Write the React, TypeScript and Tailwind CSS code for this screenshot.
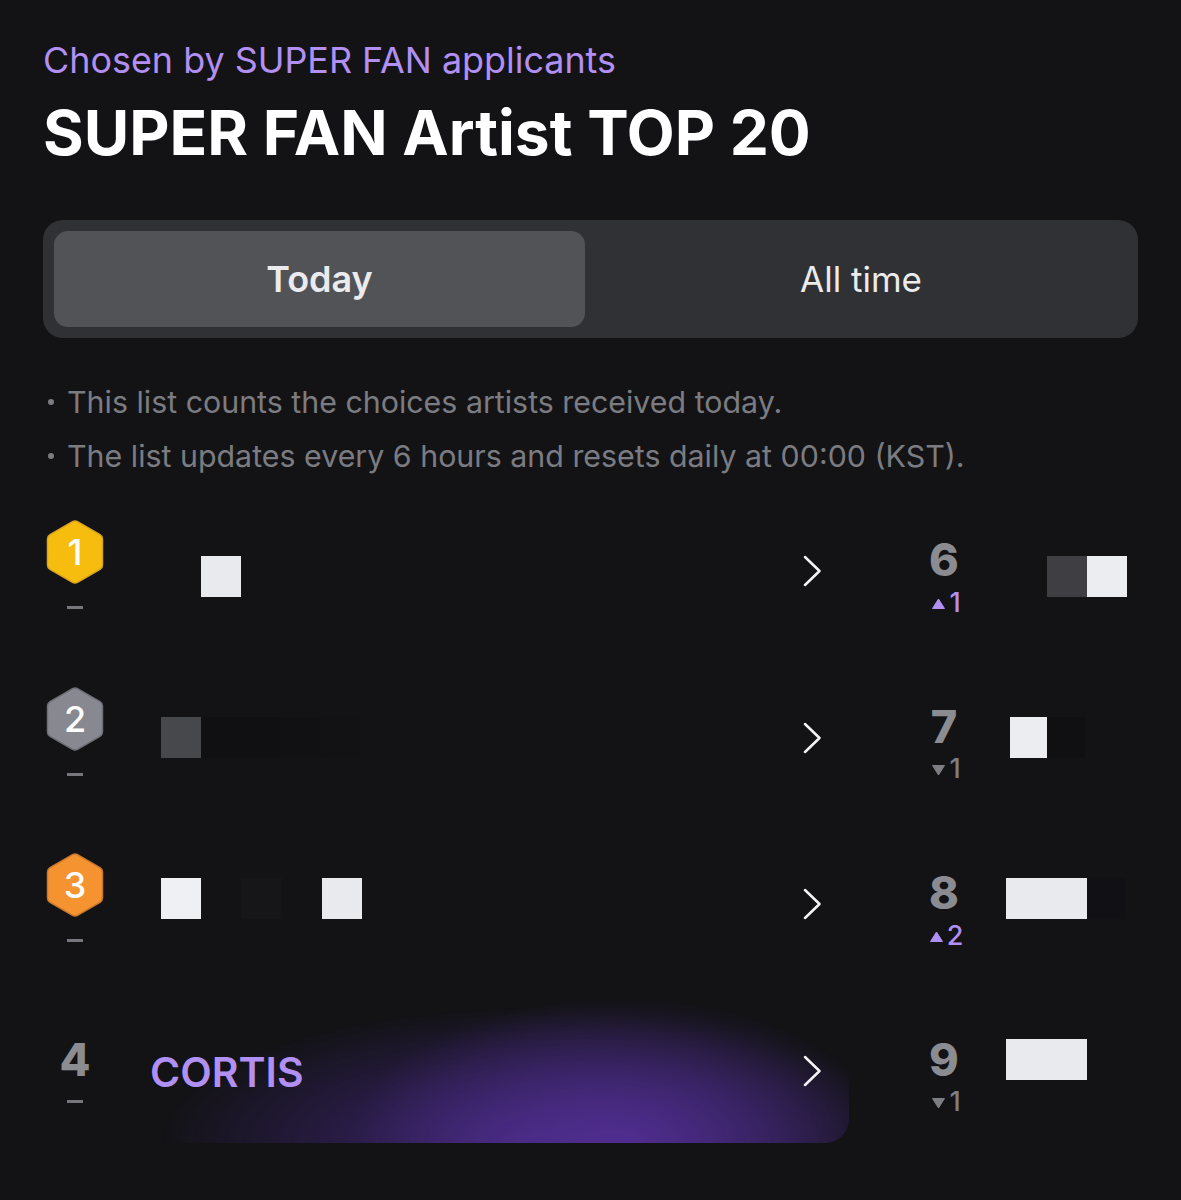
import React from "react";

type Block = { width: number; color: string };

interface Artist {
  rank: number;
  delta: "same" | "up" | "down";
  amount?: number;
  blocks: Block[];
  blockLeft: number;
  blockTop: number;
}

const WHITE = "#e9eaee";

const LEFT: Artist[] = [
  { rank: 1, delta: "same", blocks: [{ width: 40, color: WHITE }], blockLeft: 201, blockTop: 55 },
  {
    rank: 2,
    delta: "same",
    blocks: [
      { width: 40, color: "#47484c" },
      { width: 80, color: "#101013" },
      { width: 40, color: "#111114" },
      { width: 40, color: "#121215" },
    ],
    blockLeft: 161,
    blockTop: 49,
  },
  {
    rank: 3,
    delta: "same",
    blocks: [
      { width: 40, color: "#eff0f4" },
      { width: 40, color: "#131316" },
      { width: 41, color: "#161619" },
      { width: 40, color: "#131316" },
      { width: 40, color: WHITE },
    ],
    blockLeft: 161,
    blockTop: 43.5,
  },
];

const RIGHT: Artist[] = [
  {
    rank: 6,
    delta: "up",
    amount: 1,
    blocks: [
      { width: 40, color: "#3e3e43" },
      { width: 40, color: "#ecedf1" },
    ],
    blockLeft: 1047,
    blockTop: 55,
  },
  {
    rank: 7,
    delta: "down",
    amount: 1,
    blocks: [
      { width: 37, color: "#ecedf1" },
      { width: 38, color: "#101013" },
    ],
    blockLeft: 1010,
    blockTop: 49,
  },
  {
    rank: 8,
    delta: "up",
    amount: 2,
    blocks: [
      { width: 81, color: WHITE },
      { width: 38, color: "#111115" },
    ],
    blockLeft: 1006,
    blockTop: 43.5,
  },
  {
    rank: 9,
    delta: "down",
    amount: 1,
    blocks: [{ width: 81, color: WHITE }],
    blockLeft: 1006,
    blockTop: 38,
  },
];

function Hexagon({ rank, fill, edge }: { rank: number; fill: string; edge: string }) {
  return (
    <div className="relative w-[58px] h-[64px] flex items-center justify-center">
      <svg viewBox="0 0 58 64" className="absolute inset-0 w-full h-full">
        <path
          d="M26.500 1.700a5 5 0 0 1 5 0l22.500 13a5 5 0 0 1 2.500 4.300v26a5 5 0 0 1-2.500 4.300l-22.500 13a5 5 0 0 1-5 0L4 49.300a5 5 0 0 1-2.500-4.300V19a5 5 0 0 1 2.500-4.300z"
          fill={fill}
          stroke={edge}
          strokeWidth="1.500"
        />
      </svg>
      <span className="relative text-[36px] leading-none font-medium text-[#fdfdfd]">{rank}</span>
    </div>
  );
}

function Dash() {
  return <div className="w-[16px] h-[3px] bg-[#76777c]" />;
}

function Delta({ delta, amount }: { delta: "up" | "down"; amount?: number }) {
  const up = delta === "up";
  return (
    <div className={`flex items-center gap-[4px] h-[22px] text-[27px] leading-none font-medium ${up ? "text-[#b18ff3]" : "text-[#7d7e83]"}`}>
      <svg width="13" height="11" viewBox="0 0 13 11" className={up ? "mt-[3px] ml-[3px]" : "mt-[3px] ml-[3px] rotate-180"}>
        <path d="M6.500 1 L12.500 10.500 L0.500 10.500 Z" fill="currentColor" strokeLinejoin="round" stroke="currentColor" />
      </svg>
      <span>{amount}</span>
    </div>
  );
}

function Chevron() {
  return (
    <svg width="18" height="32" viewBox="0 0 18 32" className="shrink-0">
      <path d="M2 2 L16.500 16 L2 30" fill="none" stroke="#f4f4f6" strokeWidth="2.500" strokeLinecap="round" strokeLinejoin="round" />
    </svg>
  );
}

function Blocks({ blocks, marginLeft, marginTop }: { blocks: Block[]; marginLeft: number; marginTop: number }) {
  return (
    <div className="flex h-[41px]" style={{ marginLeft, marginTop }}>
      {blocks.map((b, i) => (
        <div key={i} className="h-full" style={{ width: b.width, backgroundColor: b.color }} />
      ))}
    </div>
  );
}

const HEX = [
  { fill: "#f6bd0f", edge: "#d9a521" },
  { fill: "#878890", edge: "#6e6f76" },
  { fill: "#f59331", edge: "#c9772d" },
];

export default function App() {
  return (
    <div className="w-[1181px] h-[1200px] overflow-hidden bg-[#131316] font-['Inter',sans-serif] text-white">
      <div className="pt-[40px] pl-[43px] pr-[43px]">
        <p className="text-[35.900px] leading-[40px] text-[#b18ff3]">Chosen by SUPER FAN applicants</p>
        <h1 className="mt-[18px] text-[62.200px] leading-[70px] font-bold text-white">SUPER FAN Artist TOP 20</h1>

        {/* Tabs */}
        <div className="mt-[52px] w-[1095px] h-[118px] py-[11px] pl-[11px] pr-[1px] flex rounded-[20px] bg-[#303135]">
          <div className="w-[531px] h-full rounded-[14px] bg-[#525357] flex items-center justify-center text-[36px] font-semibold text-[#ebebee]">
            Today
          </div>
          <div className="flex-1 flex items-center justify-center text-[35px] text-[#ebebee]">All time</div>
        </div>

        {/* Notes */}
        <ul className="mt-[37px] text-[30.370px] leading-[54px] text-[#7b7c81]">
          <li className="flex items-center">
            <span className="w-[6px] h-[6px] ml-[5px] mr-[13px] rounded-full bg-[#7b7c81]" />
            This list counts the choices artists received today.
          </li>
          <li className="flex items-center">
            <span className="w-[6px] h-[6px] ml-[5px] mr-[13px] rounded-full bg-[#7b7c81]" />
            The list updates every 6 hours and resets daily at 00:00 (KST).
          </li>
        </ul>
      </div>

      {/* Ranking */}
      <div className="mt-[18px] flex">
        <div className="w-[849px] shrink-0">
          {LEFT.map((a, i) => (
            <div key={a.rank} className="h-[166.500px] flex items-start pl-[46px] pr-[28px]">
              <div className="w-[58px] flex flex-col items-center pt-[19px] gap-[22px]">
                <Hexagon rank={a.rank} fill={HEX[i].fill} edge={HEX[i].edge} />
                <Dash />
              </div>
              <div className="flex-1">
                <Blocks blocks={a.blocks} marginLeft={a.blockLeft - 104} marginTop={a.blockTop} />
              </div>
              <div className="pt-[54px]">
                <Chevron />
              </div>
            </div>
          ))}

          <div className="relative h-[142px] flex items-start pl-[46px] pr-[28px]">
            <div className="absolute top-0 bottom-0 left-[140px] right-0 rounded-br-[24px] bg-[radial-gradient(ellipse_270px_145px_at_480px_100%,rgba(85,48,154,0.85)_0%,rgba(85,48,154,0.45)_50%,rgba(85,48,154,0)_100%),radial-gradient(ellipse_370px_135px_at_390px_100%,rgba(66,40,120,0.9)_0%,rgba(55,34,100,0.6)_50%,rgba(40,28,70,0)_100%)]" />
            <div className="relative w-[58px] flex flex-col items-center pt-[34px] gap-[15px]">
              <span className="text-[45px] leading-[50px] font-extrabold text-[#8b8c91]">4</span>
              <Dash />
            </div>
            <span className="relative ml-[46px] mt-[46px] text-[41px] leading-[50px] font-semibold text-[#b18ff3]">CORTIS</span>
            <div className="relative ml-auto pt-[54px]">
              <Chevron />
            </div>
          </div>
        </div>

        <div className="flex-1">
          {RIGHT.map((a) => (
            <div key={a.rank} className="h-[166.500px] flex items-start">
              <div className="w-[192px] flex flex-col items-center pt-[34px] gap-[6px]">
                <span className="text-[45px] leading-[50px] font-extrabold text-[#8b8c91] -ml-[2px]">{a.rank}</span>
                {a.delta !== "same" && <Delta delta={a.delta} amount={a.amount} />}
              </div>
              <Blocks blocks={a.blocks} marginLeft={a.blockLeft - 849 - 192} marginTop={a.blockTop} />
            </div>
          ))}
        </div>
      </div>
    </div>
  );
}
